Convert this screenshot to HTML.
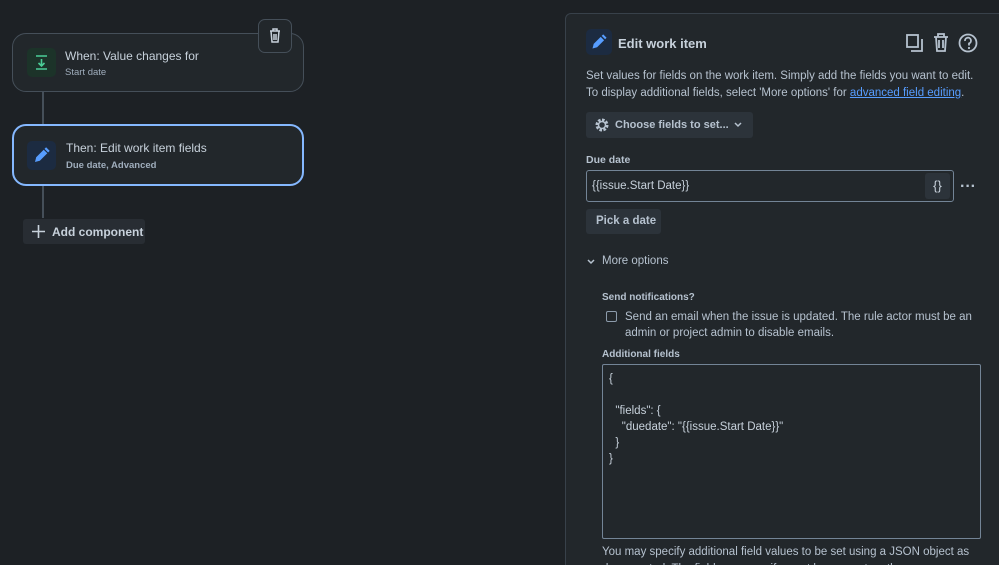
<!DOCTYPE html>
<html><head><style>
*{box-sizing:border-box;margin:0;padding:0}
html,body{width:999px;height:565px;overflow:hidden}
body{background:#1d2125;font-family:"Liberation Sans",sans-serif;color:#b6c2cf;position:relative}
.abs{position:absolute}
.card{position:absolute;left:12px;width:292px;border:1px solid #454f59;border-radius:14px;background:#22272b}
.t{font-size:12px;color:#c7d1db}
.s{font-size:9.5px;color:#9fadbc}
.ic{position:absolute;left:14px;width:29px;height:29px;border-radius:5px}
.line{position:absolute;left:42px;width:2px;background:#454f59}
.panel{position:absolute;left:565px;top:13px;width:440px;height:560px;background:#22272b;border:1px solid #38414a;border-radius:6px}
.p{font-size:11.5px;color:#b6c2cf}
.btn{position:absolute;background:#2c333a;border-radius:3px;font-size:11.5px;color:#b6c2cf;font-weight:bold}
</style></head><body>
<div class="line" style="top:91px;height:33px"></div>
<div class="line" style="top:186px;height:32px"></div>
<div class="card" style="top:33px;height:59px">
 <div class="ic" style="top:14px;background:#1c3329">
 <svg width="29" height="29" viewBox="0 0 29 29"><path d="M9 8h11M9 21h11M14.5 11v7M11.5 15l3 3 3-3" stroke="#4bce97" stroke-width="1.6" fill="none"/></svg></div>
 <div class="abs t" style="left:52px;top:15px">When: Value changes for</div>
 <div class="abs s" style="left:52px;top:33px">Start date</div>
</div>
<div class="abs" style="left:258px;top:19px;width:34px;height:34px;background:#22272b;border:1px solid #454f59;border-radius:7px">
<svg width="32" height="32" viewBox="0 0 32 32"><path d="M11 11h10M14 11v-2h4v2M12 11l1 11h6l1-11M15 14v6M17 14v6" stroke="#c7d1db" stroke-width="1.5" fill="none"/></svg></div>
<div class="card" style="top:124px;height:62px;border:2px solid #85b8ff">
 <div class="ic" style="top:15px;left:13px;background:#1c2b41">
 <svg width="29" height="29" viewBox="0 0 29 29"><path d="M8 21l1.2-4.8 7.5-7.5 3.6 3.6-7.5 7.5z" fill="#579dff"/><path d="M17.5 7.9l1.6-1.6 3.6 3.6-1.6 1.6z" fill="#579dff"/></svg></div>
 <div class="abs t" style="left:52px;top:15px">Then: Edit work item fields</div>
 <div class="abs s" style="left:52px;top:34px;font-weight:bold">Due date, Advanced</div>
</div>
<div class="btn" style="left:23px;top:219px;width:122px;height:25px;background:#282d33;font-size:12px;color:#c7d1db">
 <svg class="abs" style="left:8px;top:5px" width="15" height="15"><path d="M7.5 1v13M1 7.5h13" stroke="#c7d1db" stroke-width="1.6"/></svg>
 <span class="abs" style="left:29px;top:6px">Add component</span></div>

<div class="panel">
 <div class="abs" style="left:20px;top:15px;width:26px;height:26px;background:#1c2b41;border-radius:5px">
 <svg width="26" height="26"><path d="M6.5 19.5l1.2-4.6 7-7 3.4 3.4-7 7z" fill="#579dff"/><path d="M15.7 6.9l1.5-1.5 3.4 3.4-1.5 1.5z" fill="#579dff"/></svg></div>
 <div class="abs" style="left:52px;top:22px;font-size:13px;color:#c7d1db;font-weight:bold">Edit work item</div>
 <svg class="abs" style="left:338px;top:17px" width="86" height="24" viewBox="0 0 86 24">
  <rect x="3" y="4" width="11" height="12" stroke="#b6c2cf" stroke-width="1.8" fill="none"/><path d="M7 20h11V8" stroke="#b6c2cf" stroke-width="1.8" fill="none"/>
  <path d="M30 6h14M34 6V3h6v3M32 6l1 14h8l1-14M35 9v8M39 9v8" stroke="#b6c2cf" stroke-width="1.8" fill="none"/>
  <circle cx="64" cy="12" r="8.5" stroke="#b6c2cf" stroke-width="1.8" fill="none"/><path d="M61 10a3 3 0 1 1 4 2.5v2" stroke="#b6c2cf" stroke-width="1.8" fill="none"/><circle cx="65" cy="17" r="1.1" fill="#b6c2cf"/>
 </svg>
 <div class="abs p" style="left:20px;top:54px;line-height:17px;width:400px">Set values for fields on the work item. Simply add the fields you want to edit. To display additional fields, select 'More options' for <span style="color:#579dff;text-decoration:underline">advanced field editing</span>.</div>
 <div class="btn" style="left:20px;top:98px;width:167px;height:26px">
  <svg class="abs" style="left:8px;top:5px" width="16" height="16" viewBox="0 0 16 16"><circle cx="8" cy="8" r="5" stroke="#b6c2cf" stroke-width="3" fill="none" stroke-dasharray="2.5 1.4"/><circle cx="8" cy="8" r="3.5" stroke="#b6c2cf" stroke-width="1.5" fill="none"/></svg>
  <span class="abs" style="left:29px;top:7px;font-size:11px">Choose fields to set...</span>
  <svg class="abs" style="left:148px;top:10px" width="8" height="6"><path d="M1 1l3 3 3-3" stroke="#b6c2cf" stroke-width="1.5" fill="none"/></svg></div>
 <div class="abs" style="left:20px;top:140px;font-size:10.5px;color:#b6c2cf;font-weight:bold">Due date</div>
 <div class="abs" style="left:20px;top:156px;width:368px;height:32px;border:1px solid #738496;border-radius:3px;background:#22272b">
  <span class="abs p" style="left:5px;top:9px;color:#c7d1db">{{issue.Start Date}}</span>
  <div class="abs" style="left:338px;top:2px;width:25px;height:26px;background:#2c333a;border-radius:3px;color:#c7d1db;font-size:13px;text-align:center;line-height:26px">{}</div></div>
 <div class="abs" style="left:394px;top:164px;color:#b6c2cf;font-size:16px;font-weight:bold">···</div>
 <div class="btn" style="left:20px;top:195px;width:75px;height:25px"><span class="abs" style="left:10px;top:6px">Pick a date</span></div>
 <svg class="abs" style="left:21px;top:245px" width="8" height="6"><path d="M1 1l3 3 3-3" stroke="#b6c2cf" stroke-width="1.5" fill="none"/></svg>
 <div class="abs p" style="left:36px;top:241px">More options</div>
 <div class="abs" style="left:36px;top:278px;font-size:10px;font-weight:bold;color:#b6c2cf">Send notifications?</div>
 <div class="abs" style="left:40px;top:297px;width:11px;height:11px;border:1.5px solid #8c9bab;border-radius:2px"></div>
 <div class="abs p" style="left:59px;top:295px;line-height:16px;width:370px">Send an email when the issue is updated. The rule actor must be an admin or project admin to disable emails.</div>
 <div class="abs" style="left:36px;top:335px;font-size:10px;font-weight:bold;color:#b6c2cf">Additional fields</div>
 <div class="abs" style="left:36px;top:350px;width:379px;height:175px;border:1px solid #738496;border-radius:2px;background:#22272b">
  <pre class="abs p" style="left:6px;top:6px;font-family:'Liberation Sans',sans-serif;line-height:16px;color:#c7d1db">{

  "fields": {
    "duedate": "{{issue.Start Date}}"
  }
}</pre></div>
 <div class="abs p" style="left:36px;top:530px;line-height:17px;width:380px">You may specify additional field values to be set using a JSON object as documented. The fields you specify must be present on the screen.</div>
</div>
</body></html>
